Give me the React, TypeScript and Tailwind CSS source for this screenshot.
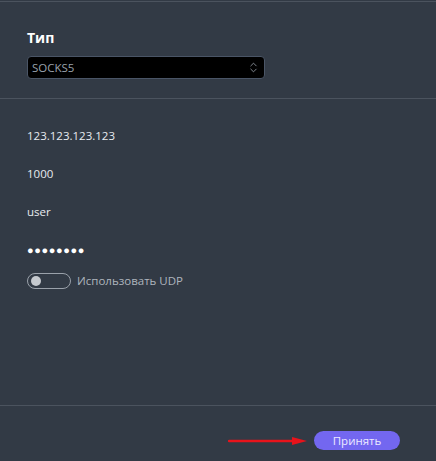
import { ChevronsUpDown } from "lucide-react";

const font = { fontFamily: '"Open Sans", "Noto Sans", sans-serif' };

export default function App() {
  return (
    <div className="flex h-[461px] w-[436px] flex-col bg-[#323a45] text-[11.5px] text-[#e8ebf0]" style={font}>
      <div className="mt-px border-t border-[#4b535e]" />

      {/* type */}
      <section className="h-[96px] px-[27px] pt-[27px]">
        <p className="text-[14px] font-bold leading-[18px] text-white">Тип</p>
        <div className="mt-[9px] flex h-[23px] w-[238px] items-center justify-between rounded-[4px] border border-[#4a5566] bg-black pl-[4px] pr-[4px]">
          <span className="text-[11.5px] text-[#9aa3ad]">SOCKS5</span>
          <ChevronsUpDown className="h-[13px] w-[13px] text-[#9aa3ad]" strokeWidth={1.5} />
        </div>
      </section>

      <div className="border-t border-[#4b535e]" />

      {/* fields */}
      <section className="flex flex-1 flex-col px-[27px] pt-[28px]">
        {["123.123.123.123", "1000", "user"].map((v) => (
          <p key={v} className="h-[38px] leading-[18px]">{v}</p>
        ))}
        <p className="h-[31px] text-[11px] leading-[18px] tracking-[0.6px] text-white">●●●●●●●●</p>
        <label className="flex items-center gap-[6px]">
          <span className="flex h-[16px] w-[44px] items-center rounded-full border border-[#9aa1aa] px-[3px]">
            <span className="h-[10px] w-[10px] rounded-full bg-[#c5c9ce]" />
          </span>
          <span className="text-[11.5px] text-[#aeb5bd]">Использовать UDP</span>
        </label>
      </section>

      <div className="border-t border-[#4b535e]" />

      {/* footer */}
      <footer className="flex h-[55px] items-center justify-end gap-[6px] pr-[36px] pt-[14px]">
        <svg width="80" height="8" viewBox="0 0 80 8" aria-hidden="true">
          <line x1="1" y1="4" x2="66" y2="4" stroke="#e8131b" strokeWidth="2.5" strokeLinecap="round" />
          <polygon points="64,0 79,4 64,8" fill="#e8131b" />
        </svg>
        <button className="h-[19px] w-[86px] rounded-full bg-[#7367f0] text-[11.5px] leading-[19px] text-[#eceaff]">
          Принять
        </button>
      </footer>
    </div>
  );
}
